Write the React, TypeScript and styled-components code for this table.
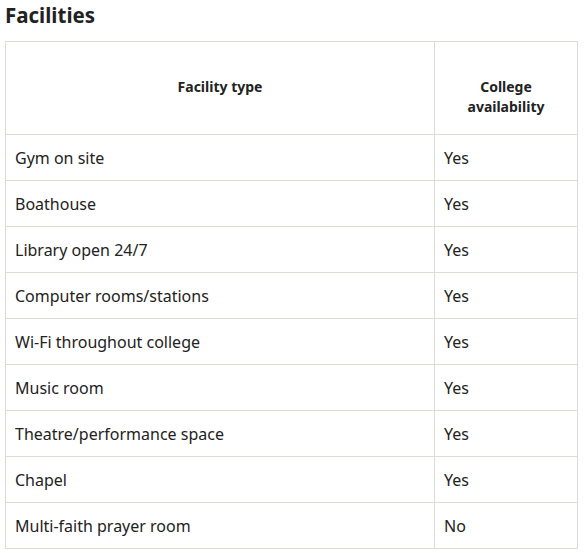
import React from "react";
import styled, { createGlobalStyle } from "styled-components";

const Global = createGlobalStyle`
  html, body { margin: 0; padding: 0; background: #fff; }
  body { font-family: "Noto Sans", "Open Sans", sans-serif; color: #222; }
`;

const Page = styled.div`
  padding: 1px 7px 0 5px;
`;

const Title = styled.h2`
  margin: 0 0 12px 0;
  font-size: 20.5px;
  line-height: 28px;
  font-weight: 700;
  color: #222;
`;

const Table = styled.table`
  width: 573px;
  border-collapse: collapse;
  border: 1px solid #dcdbd6;
`;

const HeadCell = styled.th<{ $w?: number }>`
  border: 1px solid #dcdbd6;
  font-size: 14px;
  line-height: 19.5px;
  font-weight: 700;
  text-align: center;
  vertical-align: top;
  padding: 35px 10px 18px;
  height: 39px;
  width: ${(p) => (p.$w ? `${p.$w}px` : "auto")};
  color: #222;
`;

const Cell = styled.td`
  border: 1px solid #dcdbd6;
  font-size: 16px;
  line-height: 20px;
  padding: 13px 10px 12px 9px;
  height: 20px;
  color: #222;
`;

const rows: [string, string][] = [
  ["Gym on site", "Yes"],
  ["Boathouse", "Yes"],
  ["Library open 24/7", "Yes"],
  ["Computer rooms/stations", "Yes"],
  ["Wi-Fi throughout college", "Yes"],
  ["Music room", "Yes"],
  ["Theatre/performance space", "Yes"],
  ["Chapel", "Yes"],
  ["Multi-faith prayer room", "No"],
];

export default function App() {
  return (
    <>
      <Global />
      <Page>
        <Title>Facilities</Title>
        <Table>
          <thead>
            <tr>
              <HeadCell>Facility type</HeadCell>
              <HeadCell $w={122}>
                College
                <br />
                availability
              </HeadCell>
            </tr>
          </thead>
          <tbody>
            {rows.map(([a, b]) => (
              <tr key={a}>
                <Cell>{a}</Cell>
                <Cell>{b}</Cell>
              </tr>
            ))}
          </tbody>
        </Table>
      </Page>
    </>
  );
}
